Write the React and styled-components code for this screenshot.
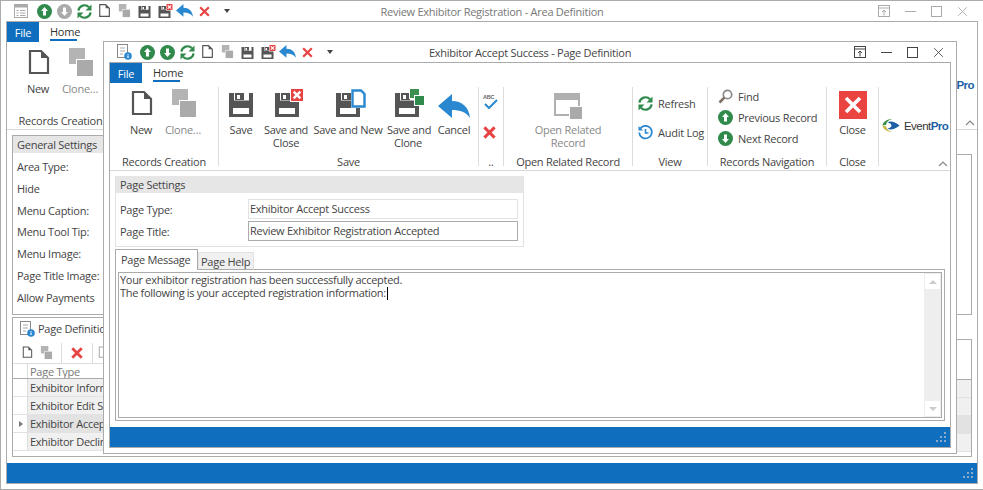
import React from "react";
import styled, { createGlobalStyle } from "styled-components";

const Global = createGlobalStyle`
  html, body { margin: 0; padding: 0; background: #fff; }
  body { font-family: "Open Sans", "Liberation Sans", sans-serif; font-size: 11px; letter-spacing: -0.26px; color: #444; }
  * { box-sizing: border-box; }
`;

const GREEN = "#2f8a4c";
const RED = "#e84343";
const BLUE = "#2a88d0";
const DARK = "#555";
const LINE = "#ababab";
const STATUS = "#106ebe";

/* ---------- drawings ---------- */
const Doc = ({ s = 30, c = DARK }) => (
  <svg width={s} height={s} viewBox="0 0 30 30">
    <path d="M7 3H18L25 10V25H7Z" fill="#fff" stroke={c} strokeWidth="2.2" />
    <path d="M18 3L25 10H18Z" fill={c} />
  </svg>
);
const Clone = ({ s = 30 }) => (
  <svg width={s} height={s} viewBox="0 0 30 30">
    <rect x="4" y="0" width="16" height="16" fill="#b4b4b4" />
    <rect x="11" y="11" width="18" height="18" fill="#fff" />
    <rect x="12" y="12" width="16" height="16" fill="#aaa" />
  </svg>
);
const Floppy = ({ x = 0, y = 0, c = DARK }) => (
  <g transform={`translate(${x} ${y})`}>
    <rect width="24" height="24" fill={c} />
    <rect x="5" y="0" width="15" height="7.500" fill="#fff" />
    <rect x="6" y="0" width="9" height="7" fill={c} />
    <rect x="8" y="2" width="3" height="4" fill="#fff" />
    <rect x="4" y="15" width="16" height="6" fill="#fff" />
  </g>
);
const CrossMark = ({ x, y, s, c = "#fff", w = 2 }) => (
  <path d={`M${x + s * 0.22} ${y + s * 0.22}L${x + s * 0.78} ${y + s * 0.78}M${x + s * 0.78} ${y + s * 0.22}L${x + s * 0.22} ${y + s * 0.78}`} stroke={c} strokeWidth={w} fill="none" />
);
const Save = ({ h = 30 }) => (
  <svg width={h} height={h} viewBox="0 0 30 30"><Floppy x="3" y="4" /></svg>
);
const SaveClose = ({ h = 30 }) => (
  <svg width={(h * 36) / 30} height={h} viewBox="0 0 36 30">
    <Floppy x="7" y="4" />
    <rect x="22" y="0" width="14" height="13" fill="#fff" />
    <rect x="23" y="0" width="12" height="12" fill={RED} />
    <CrossMark x={23} y={0} s={12} w={2.4} />
  </svg>
);
const SaveNew = () => (
  <svg width="36" height="30" viewBox="0 0 36 30">
    <Floppy x="6" y="4" />
    <rect x="21" y="0" width="15" height="19" fill="#fff" />
    <path d="M22.500 1.500H31L34.500 5V17.500H22.500Z" fill="#fff" stroke={BLUE} strokeWidth="2.4" />
  </svg>
);
const SaveClone = () => (
  <svg width="36" height="30" viewBox="0 0 36 30">
    <Floppy x="5" y="4" />
    <rect x="19" y="0" width="10" height="10" fill="#fff" />
    <rect x="20" y="0" width="9" height="9" fill="#3d8f4f" />
    <rect x="24" y="6" width="11" height="11" fill="#fff" />
    <rect x="25" y="7" width="9" height="9" fill="#2f8a4c" />
  </svg>
);
const Undo = ({ w = 32 }) => (
  <svg width={w} height={(w * 25) / 32} viewBox="0 0 32 25">
    <path d="M0 12L14 0V7C24 7 31 13 32 24C28 18 22 16 14 16V24Z" fill={BLUE} />
  </svg>
);
const XIcon = ({ s = 14, c = RED, w = 3.2 }) => (
  <svg width={s} height={s} viewBox="0 0 14 14">
    <path d="M1.500 1.500L12.500 12.500M12.500 1.500L1.500 12.500" stroke={c} strokeWidth={w} fill="none" />
  </svg>
);
const Circle = ({ dir = "up", c = GREEN, s = 15 }) => (
  <svg width={s} height={s} viewBox="0 0 15 15">
    <circle cx="7.5" cy="7.5" r="7.5" fill={c} />
    <path d={dir === "up" ? "M7.5 3L11 7H9V11.5H6V7H4Z" : "M7.5 12L11 8H9V3.5H6V8H4Z"} fill="#fff" />
  </svg>
);
const Refresh = ({ s = 15 }) => (
  <svg width={s} height={s} viewBox="0 0 15 15">
    <path d="M1.400 6.600A6.200 6.200 0 0 1 12 3.200" stroke={GREEN} strokeWidth="2.2" fill="none" />
    <path d="M14.500 0.500V6.500H8.500Z" fill={GREEN} />
    <path d="M13.600 8.400A6.200 6.200 0 0 1 3 11.800" stroke={GREEN} strokeWidth="2.2" fill="none" />
    <path d="M0.500 14.500V8.500H6.500Z" fill={GREEN} />
  </svg>
);
const Clock = () => (
  <svg width="15" height="15" viewBox="0 0 15 15">
    <path d="M2.400 3.400A6.300 6.300 0 1 1 1.200 7.500" stroke={BLUE} strokeWidth="1.8" fill="none" />
    <path d="M0.500 1V5.500H5Z" fill={BLUE} />
    <path d="M7.500 4V8H10.500" stroke={BLUE} strokeWidth="1.6" fill="none" />
  </svg>
);
const Search = () => (
  <svg width="15" height="15" viewBox="0 0 15 15">
    <circle cx="9.5" cy="5.5" r="4.2" fill="none" stroke="#8a8a8a" strokeWidth="1.7" />
    <path d="M6.300 8.700L1.500 13.500" stroke="#7d6f66" strokeWidth="2.6" />
  </svg>
);
const InfoDoc = () => (
  <svg width="15" height="16" viewBox="0 0 15 16">
    <rect x="0.5" y="0.5" width="10" height="13" fill="#fff" stroke="#888" />
    <path d="M3 4H8M3 7H8M3 10H6" stroke="#aaa" />
    <circle cx="11" cy="12" r="3.8" fill={BLUE} />
    <path d="M11 10V10.800M11 11.600V14" stroke="#fff" strokeWidth="1.2" />
  </svg>
);
const ListIcon = () => (
  <svg width="14" height="14" viewBox="0 0 14 14">
    <rect x="0.5" y="0.5" width="13" height="13" fill="#fff" stroke="#aaa" />
    <rect x="0.5" y="0.5" width="13" height="3" fill="#aaa" />
    <path d="M2.500 6.500H4.500M6 6.500H11.500M2.500 9H4.500M6 9H11.500M2.500 11.500H4.500M6 11.500H11.500" stroke="#aaa" />
  </svg>
);
const Spell = () => (
  <svg width="15" height="15" viewBox="0 0 15 15">
    <path d="M2 10L6 14L14 6" stroke={BLUE} strokeWidth="2" fill="none" />
    <text x="0" y="5" fontSize="5.5" fontWeight="700" fill="#666" fontFamily="Liberation Sans">ABC</text>
  </svg>
);
const RelatedIcon = () => (
  <svg width="28" height="26" viewBox="0 0 28 26">
    <path d="M1 1H25V22H1Z" fill="#fff" stroke="#b0b0b0" strokeWidth="2" />
    <rect x="0" y="0" width="26" height="7" fill="#b0b0b0" />
    <rect x="15" y="13" width="13" height="13" fill="#fff" />
    <rect x="16" y="14" width="12" height="12" fill="#aaa" />
  </svg>
);
const CloseSquare = () => (
  <svg width="28" height="28" viewBox="0 0 28 28">
    <rect width="28" height="28" fill="#ea4440" />
    <path d="M7 7L21 21M21 7L7 21" stroke="#fff" strokeWidth="3.600" />
  </svg>
);
const Pin = ({ c }) => (
  <svg width="12" height="12" viewBox="0 0 12 12">
    <rect x="0.5" y="0.5" width="11" height="11" fill="none" stroke={c} />
    <path d="M0.500 3H11.500" stroke={c} />
    <path d="M6 10.500V5M4 7L6 5L8 7" stroke={c} fill="none" />
  </svg>
);
const Minimize = ({ c }) => (
  <svg width="11" height="11" viewBox="0 0 11 11"><path d="M0 5.500H11" stroke={c} /></svg>
);
const Maximize = ({ c }) => (
  <svg width="11" height="11" viewBox="0 0 11 11"><rect x="0.5" y="0.5" width="10" height="10" fill="none" stroke={c} /></svg>
);
const Grip = () => (
  <svg width="10" height="10" viewBox="0 0 10 10" fill="#8fa9c9">
    <rect x="8" y="0" width="2" height="2" /><rect x="4" y="4" width="2" height="2" /><rect x="8" y="4" width="2" height="2" />
    <rect x="0" y="8" width="2" height="2" /><rect x="4" y="8" width="2" height="2" /><rect x="8" y="8" width="2" height="2" />
  </svg>
);
const Chevron = () => (
  <svg width="10" height="6" viewBox="0 0 10 6"><path d="M1 5L5 1L9 5" fill="none" stroke="#888" strokeWidth="1.2" /></svg>
);
const Swoosh = () => (
  <svg width="18" height="13" viewBox="0 0 21 16">
    <path d="M0 8C1 3 6 0 12 0C8 1 5 3 4.500 7Z" fill="#3a8d46" />
    <path d="M0 8C1 13 6 16 12 16C8 15 5 13 4.500 9Z" fill="#c9b84a" />
    <path d="M6 4C10 2 15 3 21 8C15 13 10 14 6 12C10 11 11 9.500 11 8C11 6.500 10 5 6 4Z" fill="#1b5fa8" />
  </svg>
);

/* ---------- windows ---------- */
const Page = styled.div`
  position: relative;
  width: 983px;
  height: 490px;
  overflow: hidden;
  background: #fff;
`;
const Window = styled.div`
  display: flex;
  flex-direction: column;
  background: #fff;
  border: 1px solid ${LINE};
`;
const OuterWindow = styled(Window)`
  width: 983px;
  height: 490px;
  padding: 0 5px 5px 5px;
  border-right: none;
`;
const InnerWindow = styled(Window)`
  position: absolute;
  left: 103px;
  top: 41px;
  width: 854px;
  height: 413px;
  padding: 0 5px 5px 5px;
`;
const TitleBar = styled.div`
  flex: none;
  display: grid;
  grid-template-columns: 1fr auto 1fr;
  align-items: center;
  height: 20px;
  margin: 0 -5px;
`;
const Title = styled.div`
  color: ${(p) => (p.$active ? "#444" : "#777")};
  white-space: nowrap;
`;
const Qat = styled.div`
  display: flex;
  align-items: center;
  padding-left: 10px;
`;
const QatSlot = styled.span`
  display: flex;
  align-items: center;
  justify-content: center;
  width: 20px;
  height: 20px;
  margin-left: ${(p) => p.$gap || 0}px;
`;
const Caret = styled.span`
  width: 0;
  height: 0;
  margin-left: 10px;
  border: 3.5px solid transparent;
  border-top: 4px solid #444;
  border-bottom: none;
`;
const WinControls = styled.div`
  display: flex;
  justify-content: flex-end;
  align-items: center;
  gap: 15px;
  padding-right: ${(p) => p.$right}px;
`;
const Frame = styled.div`
  flex: 1;
  min-height: 0;
  display: flex;
  flex-direction: column;
  border: 1px solid ${LINE};
`;
const TabStrip = styled.div`
  flex: none;
  display: flex;
  height: 20px;
`;
const FileTab = styled.div`
  width: 32px;
  padding-top: 1px;
  background: ${STATUS};
  color: #fff;
  display: flex;
  align-items: center;
  justify-content: center;
`;
const HomeTab = styled.div`
  margin-left: 11px;
  height: 19px;
  width: 27px;
  line-height: 19px;
  text-align: center;
  white-space: nowrap;
  color: #333;
  border-bottom: 2px solid ${STATUS};
`;
const Ribbon = styled.div`
  flex: none;
  position: relative;
  display: flex;
  height: 88px;
  border-bottom: 1px solid #d8d8d8;
`;
const Group = styled.div`
  flex: none;
  display: flex;
  flex-direction: column;
  width: ${(p) => p.$w}px;
  height: 79px;
  margin-top: 4px;
  border-right: ${(p) => (p.$last ? "none" : "1px solid #dcdcdc")};
`;
const GroupBody = styled.div`
  flex: 1;
  display: flex;
  padding-left: ${(p) => p.$pad || 0}px;
`;
const GroupLabel = styled.div`
  flex: none;
  height: 14px;
  margin-bottom: -3px;
  line-height: 14px;
  text-align: center;
  white-space: nowrap;
`;
const LargeBtn = styled.div`
  flex: none;
  width: ${(p) => p.$w}px;
  padding-top: 2px;
  text-align: center;
  line-height: 13px;
  white-space: nowrap;
  color: ${(p) => (p.$off ? "#888" : "#444")};
`;
const IconBox = styled.div`
  display: flex;
  align-items: flex-end;
  justify-content: center;
  height: 30px;
  margin-bottom: 4px;
`;
const SmallStack = styled.div`
  display: flex;
  flex-direction: column;
  gap: ${(p) => p.$gap}px;
  padding: ${(p) => p.$top}px 0 0 ${(p) => p.$left}px;
`;
const SmallBtn = styled.div`
  display: flex;
  align-items: center;
  gap: 5px;
  height: 15px;
  white-space: nowrap;
`;
const LogoWrap = styled.div`
  display: flex;
  align-items: center;
  height: 60px;
  padding: 17px 0 0 3px;
`;
const LogoText = styled.span`
  font-family: "Liberation Sans", sans-serif;
  font-size: 11.5px;
  letter-spacing: -0.55px;
  margin-left: 4px;
  color: #333;
  b { color: #1b5fa8; font-weight: 700; }
`;
const Collapse = styled.div`
  position: absolute;
  right: 2px;
  bottom: 3px;
  display: flex;
`;
const StatusBar = styled.div`
  flex: none;
  display: flex;
  justify-content: flex-end;
  align-items: center;
  height: 20px;
  padding-right: 4px;
  background: ${STATUS};
`;

/* ---------- outer content ---------- */
const OuterLogo = styled.div`
  position: absolute;
  right: 3px;
  top: 36px;
  display: flex;
  align-items: center;
`;
const OuterBody = styled.div`
  flex: 1;
  min-height: 0;
  display: grid;
  grid-template-columns: 488px 1fr;
  grid-template-rows: 180px 140px;
  row-gap: 2px;
  padding: 5px 5px 6px;
`;
const Panel = styled.div`
  border: 1px solid ${LINE};
  ${(p) => p.$openRight && "border-right: none;"}
  ${(p) => p.$openLeft && "border-left: none;"}
  margin-top: ${(p) => p.$top || 0}px;
  min-width: 0;
`;
const PanelHead = styled.div`
  height: 17px;
  line-height: 17px;
  padding-left: 4px;
  background: #e6e6e6;
`;
const FormList = styled.div`
  display: flex;
  flex-direction: column;
  padding: 3px 0 0 4px;
`;
const FormLabel = styled.div`
  height: 21.8px;
  line-height: 22px;
  white-space: nowrap;
`;
const DefTitle = styled.div`
  display: flex;
  align-items: center;
  gap: 3px;
  height: 21px;
  margin-bottom: 3px;
  padding-left: 7px;
`;
const DefTools = styled.div`
  display: flex;
  align-items: center;
  height: 22px;
  padding-left: 7px;
  border-bottom: 1px solid #dcdcdc;
`;
const DefTool = styled.span`
  display: flex;
  justify-content: center;
  width: ${(p) => p.$w}px;
`;
const ToolSep = styled.span`
  width: 1px;
  height: 20px;
  background: #dcdcdc;
  margin: 0 ${(p) => p.$m}px;
`;
const GridHead = styled.div`
  display: flex;
  height: 15px;
  line-height: 15px;
  border-bottom: 1px solid ${LINE};
  color: #777;
`;
const Indicator = styled.div`
  flex: none;
  width: 15px;
  height: 100%;
  display: flex;
  align-items: center;
  justify-content: flex-end;
  padding-right: 4px;
  border-right: 1px solid #dcdcdc;
`;
const Arrow = styled.span`
  width: 0;
  height: 0;
  border: 3.5px solid transparent;
  border-left: 4px solid #777;
  border-right: none;
`;
const GridCell = styled.div`
  flex: 1;
  padding-left: 2px;
  white-space: nowrap;
  overflow: hidden;
`;
const GridRow = styled.div`
  display: flex;
  height: 18px;
  line-height: 17px;
  background: ${(p) => (p.$sel ? "#e2e2e2" : "#f0f0f0")};
  border-bottom: 1px solid #e2e2e2;
`;
const GridRowHead = styled(Indicator)`
  background: #fff;
`;
const OuterRightGrid = styled.div`
  height: 40px;
  border-bottom: 1px solid ${LINE};
`;

/* ---------- inner content ---------- */
const InnerBody = styled.div`
  flex: 1;
  min-height: 0;
  display: flex;
  flex-direction: column;
  padding: 5px 5px 6px;
`;
const SettingsBox = styled.div`
  flex: none;
  width: 409px;
  height: 71px;
  border: 1px solid #e2e2e2;
  border-top: none;
`;
const FieldRow = styled.div`
  display: grid;
  grid-template-columns: 128px 270px;
  align-items: center;
  height: 22px;
  padding-left: 4px;
`;
const FieldRows = styled.div`
  padding-top: 5px;
`;
const Field = styled.div`
  height: 20px;
  line-height: 18px;
  padding-left: 1px;
  border: 1px solid ${(p) => (p.$focus ? LINE : "#e2e2e2")};
  white-space: nowrap;
`;
const Tabs = styled.div`
  flex: none;
  display: flex;
  align-items: flex-end;
  height: 21px;
  margin-top: 2px;
  position: relative;
  z-index: 1;
`;
const TabOn = styled.div`
  width: 83px;
  height: 21px;
  line-height: 20px;
  padding-left: 5px;
  white-space: nowrap;
  background: #fff;
  border: 1px solid ${LINE};
  border-bottom: none;
`;
const TabOff = styled.div`
  width: 56px;
  height: 18px;
  line-height: 18px;
  padding-left: 2px;
  white-space: nowrap;
  background: #f0f0f0;
  border: 1px solid #e2e2e2;
  border-bottom: 1px solid ${LINE};
`;
const TabPage = styled.div`
  flex: 1;
  min-height: 0;
  margin-top: -1px;
  padding: 2px;
  border: 1px solid ${LINE};
`;
const Memo = styled.div`
  display: flex;
  height: 100%;
  border: 1px solid ${LINE};
`;
const MemoText = styled.div`
  flex: 1;
  padding: 0 1px;
  line-height: 13px;
  letter-spacing: -0.31px;
  color: #444;
`;
const TextCaret = styled.span`
  display: inline-block;
  width: 1px;
  height: 13px;
  margin-left: 1px;
  vertical-align: -3px;
  background: #000;
`;
const Scroll = styled.div`
  flex: none;
  width: 17px;
  display: flex;
  flex-direction: column;
  justify-content: space-between;
  padding: 1px;
  background: #eee;
`;
const ScrollBtn = styled.div`
  height: 15px;
  background: #fff;
  display: flex;
  align-items: center;
  justify-content: center;
`;
const Tri = styled.span`
  width: 0;
  height: 0;
  border-left: 4px solid transparent;
  border-right: 4px solid transparent;
  ${(p) => (p.$down ? "border-top: 4px solid #ccc;" : "border-bottom: 4px solid #ccc;")}
`;

const QuickBar = ({ first, downColor }) => (
  <Qat>
    <QatSlot>{first}</QatSlot>
    <QatSlot $gap={3}><Circle dir="up" /></QatSlot>
    <QatSlot><Circle dir="down" c={downColor} /></QatSlot>
    <QatSlot><Refresh /></QatSlot>
    <QatSlot><Doc s={16} c="#555" /></QatSlot>
    <QatSlot><Clone s={14} /></QatSlot>
    <QatSlot><Save h={15} /></QatSlot>
    <QatSlot><SaveClose h={15} /></QatSlot>
    <QatSlot><Undo w={17} /></QatSlot>
    <QatSlot><XIcon s={11} w={2.8} /></QatSlot>
    <Caret />
  </Qat>
);

const Controls = ({ c, right }) => (
  <WinControls $right={right}>
    <Pin c={c} />
    <Minimize c={c} />
    <Maximize c={c} />
    <XIcon s={11} c={c} w={1.1} />
  </WinControls>
);

const RecordsGroup = ({ w }) => (
  <Group $w={w}>
    <GroupBody $pad={10}>
      <LargeBtn $w={42}><IconBox><Doc /></IconBox>New</LargeBtn>
      <LargeBtn $w={42} $off><IconBox><Clone /></IconBox>Clone…</LargeBtn>
    </GroupBody>
    <GroupLabel>Records Creation</GroupLabel>
  </Group>
);

const Logo = () => (
  <>
    <Swoosh />
    <LogoText>Event<b>Pro</b></LogoText>
  </>
);

export default function App() {
  return (
    <Page>
      <Global />
      <OuterWindow>
        <TitleBar>
          <QuickBar first={<ListIcon />} downColor="#aaa" />
          <Title>Review Exhibitor Registration - Area Definition</Title>
          <Controls c="#aaa" right={15} />
        </TitleBar>
        <Frame>
          <TabStrip>
            <FileTab>File</FileTab>
            <HomeTab>Home</HomeTab>
          </TabStrip>
          <Ribbon>
            <RecordsGroup w={108} />
            <OuterLogo><Logo /></OuterLogo>
            <Collapse><Chevron /></Collapse>
          </Ribbon>
          <OuterBody>
            <Panel>
              <PanelHead>General Settings</PanelHead>
              <FormList>
                <FormLabel>Area Type:</FormLabel>
                <FormLabel>Hide</FormLabel>
                <FormLabel>Menu Caption:</FormLabel>
                <FormLabel>Menu Tool Tip:</FormLabel>
                <FormLabel>Menu Image:</FormLabel>
                <FormLabel>Page Title Image:</FormLabel>
                <FormLabel>Allow Payments</FormLabel>
              </FormList>
            </Panel>
            <Panel $top={19} />
            <Panel $openRight>
              <DefTitle><InfoDoc />Page Definitions</DefTitle>
              <DefTools>
                <DefTool $w={14}><Doc s={15} c="#555" /></DefTool>
                <DefTool $w={24} ><Clone s={14} /></DefTool>
                <ToolSep $m={3} />
                <DefTool $w={24}><XIcon s={12} /></DefTool>
                <ToolSep $m={3} />
                <DefTool $w={14}><Doc s={15} c="#aaa" /></DefTool>
              </DefTools>
              <GridHead>
                <Indicator />
                <GridCell>Page Type</GridCell>
              </GridHead>
              <GridRow><GridRowHead /><GridCell>Exhibitor Information</GridCell></GridRow>
              <GridRow><GridRowHead /><GridCell>Exhibitor Edit Success</GridCell></GridRow>
              <GridRow $sel><GridRowHead><Arrow /></GridRowHead><GridCell>Exhibitor Accept Success</GridCell></GridRow>
              <GridRow><GridRowHead /><GridCell>Exhibitor Decline Success</GridCell></GridRow>
            </Panel>
            <Panel $top={22} $openLeft>
              <OuterRightGrid />
              <GridRow />
              <GridRow />
              <GridRow $sel />
              <GridRow />
            </Panel>
          </OuterBody>
          <StatusBar><Grip /></StatusBar>
        </Frame>
      </OuterWindow>

      <InnerWindow>
        <TitleBar>
          <QuickBar first={<InfoDoc />} downColor={GREEN} />
          <Title $active>Exhibitor Accept Success - Page Definition</Title>
          <Controls c="#444" right={12} />
        </TitleBar>
        <Frame>
          <TabStrip>
            <FileTab>File</FileTab>
            <HomeTab>Home</HomeTab>
          </TabStrip>
          <Ribbon>
            <RecordsGroup w={109} />
            <Group $w={260}>
              <GroupBody>
                <LargeBtn $w={44}><IconBox><Save /></IconBox>Save</LargeBtn>
                <LargeBtn $w={46}><IconBox><SaveClose /></IconBox>Save and<br />Close</LargeBtn>
                <LargeBtn $w={78}><IconBox><SaveNew /></IconBox>Save and New</LargeBtn>
                <LargeBtn $w={42}><IconBox><SaveClone /></IconBox>Save and<br />Clone</LargeBtn>
                <LargeBtn $w={50}><IconBox><Undo /></IconBox>Cancel</LargeBtn>
              </GroupBody>
              <GroupLabel>Save</GroupLabel>
            </Group>
            <Group $w={25}>
              <GroupBody>
                <SmallStack $gap={16} $top={7} $left={4}>
                  <SmallBtn><Spell /></SmallBtn>
                  <SmallBtn><XIcon s={13} /></SmallBtn>
                </SmallStack>
              </GroupBody>
              <GroupLabel>..</GroupLabel>
            </Group>
            <Group $w={129}>
              <GroupBody>
                <LargeBtn $w={128} $off><IconBox><RelatedIcon /></IconBox>Open Related<br />Record</LargeBtn>
              </GroupBody>
              <GroupLabel>Open Related Record</GroupLabel>
            </Group>
            <Group $w={75}>
              <GroupBody>
                <SmallStack $gap={14} $top={9} $left={5}>
                  <SmallBtn><Refresh />Refresh</SmallBtn>
                  <SmallBtn><Clock />Audit Log</SmallBtn>
                </SmallStack>
              </GroupBody>
              <GroupLabel>View</GroupLabel>
            </Group>
            <Group $w={119}>
              <GroupBody>
                <SmallStack $gap={6} $top={2} $left={10}>
                  <SmallBtn><Search />Find</SmallBtn>
                  <SmallBtn><Circle dir="up" />Previous Record</SmallBtn>
                  <SmallBtn><Circle dir="down" />Next Record</SmallBtn>
                </SmallStack>
              </GroupBody>
              <GroupLabel>Records Navigation</GroupLabel>
            </Group>
            <Group $w={52}>
              <GroupBody>
                <LargeBtn $w={51}><IconBox><CloseSquare /></IconBox>Close</LargeBtn>
              </GroupBody>
              <GroupLabel>Close</GroupLabel>
            </Group>
            <Group $last $w={70}>
              <LogoWrap><Logo /></LogoWrap>
            </Group>
            <Collapse><Chevron /></Collapse>
          </Ribbon>
          <InnerBody>
            <SettingsBox>
              <PanelHead>Page Settings</PanelHead>
              <FieldRows>
                <FieldRow>Page Type:<Field>Exhibitor Accept Success</Field></FieldRow>
                <FieldRow>Page Title:<Field $focus>Review Exhibitor Registration Accepted</Field></FieldRow>
              </FieldRows>
            </SettingsBox>
            <Tabs>
              <TabOn>Page Message</TabOn>
              <TabOff>Page Help</TabOff>
            </Tabs>
            <TabPage>
              <Memo>
                <MemoText>
                  Your exhibitor registration has been successfully accepted.<br />
                  The following is your accepted registration information:<TextCaret />
                </MemoText>
                <Scroll>
                  <ScrollBtn><Tri /></ScrollBtn>
                  <ScrollBtn><Tri $down /></ScrollBtn>
                </Scroll>
              </Memo>
            </TabPage>
          </InnerBody>
          <StatusBar><Grip /></StatusBar>
        </Frame>
      </InnerWindow>
    </Page>
  );
}
